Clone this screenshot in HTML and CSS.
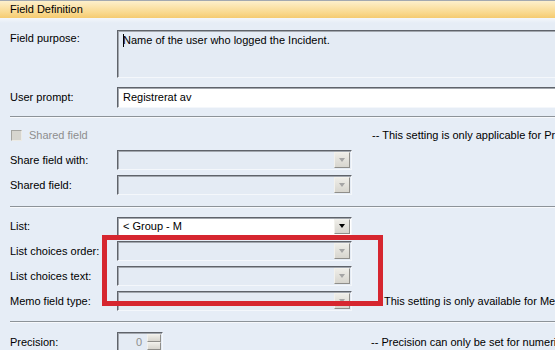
FILE: index.html
```html
<!DOCTYPE html>
<html lang="en">
<head>
  <meta charset="UTF-8" />
  <title>Field Definition</title>
  <link rel="stylesheet" href="styles.css">
</head>
<body>
<div class="panel">
  <div class="panel-title">Field Definition</div>

  <div class="panel-body">
    <!-- Text settings -->
    <div class="group group-text">
      <div class="row row-tall">
        <span class="label">Field purpose:</span>
        <div class="memo"><span class="caret"></span>Name of the user who logged the Incident.</div>
      </div>
      <div class="row">
        <span class="label">User prompt:</span>
        <div class="edit">Registrerat av</div>
      </div>
    </div>

    <div class="sep"></div>

    <!-- Shared field settings -->
    <div class="group group-shared">
      <div class="row row-check">
        <span class="check-wrap"><span class="checkbox"></span>Shared field</span>
        <span class="note">-- This setting is only applicable for Process Fields</span>
      </div>
      <div class="row">
        <span class="label">Share field with:</span>
        <div class="combo"><span class="combo-btn"><span class="arrow"></span></span></div>
      </div>
      <div class="row">
        <span class="label">Shared field:</span>
        <div class="combo"><span class="combo-btn"><span class="arrow"></span></span></div>
      </div>
    </div>

    <div class="sep"></div>

    <!-- List settings -->
    <div class="group group-list">
      <div class="row">
        <span class="label">List:</span>
        <div class="combo combo-on"><span class="combo-text">&lt; Group - M</span><span class="combo-btn"><span class="arrow"></span></span></div>
      </div>
      <div class="row">
        <span class="label">List choices order:</span>
        <div class="combo"><span class="combo-btn"><span class="arrow"></span></span></div>
      </div>
      <div class="row">
        <span class="label">List choices text:</span>
        <div class="combo"><span class="combo-btn"><span class="arrow"></span></span></div>
      </div>
      <div class="row">
        <span class="label">Memo field type:</span>
        <div class="combo"><span class="combo-btn"><span class="arrow"></span></span></div>
        <span class="note note-memo">This setting is only available for Memo fields</span>
      </div>
      <!-- annotation box drawn over the screenshot -->
      <div class="highlight"></div>
    </div>

    <div class="sep"></div>

    <!-- Numeric settings -->
    <div class="group group-num">
      <div class="row">
        <span class="label">Precision:</span>
        <div class="spin-cell">
          <div class="spin"><span class="spin-value">0</span><span class="spin-btns"><span class="spin-up"></span><span class="spin-down"></span></span></div>
        </div>
        <span class="note">-- Precision can only be set for numeric fields</span>
      </div>
    </div>
  </div>
</div>
</body>
</html>
```

FILE: styles.css
```css
body {
  margin: 0;
  padding: 0;
  background-color: #e6edf6;
  font-family: "Liberation Sans", Arial, sans-serif;
  font-size: 11px;
  color: #000;
  overflow: hidden;
}

.panel {
  width: 640px;
}

.panel-title {
  height: 17px;
  line-height: 17px;
  padding-left: 10px;
  border-top: 1px solid #a3a9b0;
  background: linear-gradient(#fdf0cc, #f9d88c 70%, #f5cb70);
}

.panel-body {
  padding-left: 10px;
  background: linear-gradient(#f4f7fb, #e6edf6 5px);
}

.group {
  display: flex;
  flex-direction: column;
  gap: 5px;
}

.group-text {
  padding-top: 12px;
  gap: 9px;
}

.group-shared {
  padding-top: 9px;
}

.group-list {
  position: relative;
  padding-top: 8px;
}

.group-num {
  padding-top: 9px;
}

.row {
  display: flex;
  align-items: center;
  height: 20px;
}

.row-tall {
  height: 48px;
  align-items: flex-start;
}

.row-check {
  height: 16px;
  margin-bottom: 2px;
}

.label {
  width: 107px;
  flex-shrink: 0;
}

.row-tall .label {
  padding-top: 2px;
}

.sep {
  height: 1px;
  background-color: #8d9399;
  border-bottom: 1px solid #f7f9fc;
}

.group-text + .sep {
  margin-top: 9px;
}

.group-shared + .sep {
  margin-top: 11px;
}

.group-list + .sep {
  margin-top: 10px;
}

/* inputs */
.memo,
.edit,
.combo,
.spin {
  box-sizing: border-box;
  border: 1px solid;
  border-color: #5f636a #f4f7fb #f4f7fb #5f636a;
  box-shadow: inset 1px 1px 0 #a2a7ae;
}

.memo {
  flex: 1;
  height: 48px;
  padding: 3px 5px;
  background-color: #e4ebf4;
}

.caret {
  display: inline-block;
  width: 1px;
  height: 13px;
  margin-right: -1px;
  vertical-align: -3px;
  background-color: #000;
}

.edit {
  flex: 1;
  height: 21px;
  line-height: 19px;
  padding-left: 5px;
  background-color: #fff;
}

.check-wrap {
  display: flex;
  align-items: center;
  width: 361px;
  color: #8e8e8e;
  padding-left: 1px;
}

.checkbox {
  width: 11px;
  height: 11px;
  margin-right: 7px;
  box-sizing: border-box;
  border: 1px solid;
  border-color: #a4a4a0 #ecebe6 #ecebe6 #a4a4a0;
  background-color: #d6d5cf;
}

.note {
  white-space: nowrap;
  margin-left: 19px;
}

.check-wrap + .note {
  margin-left: 0;
}

.note-memo {
  margin-left: 32px;
}

.combo {
  display: flex;
  align-items: center;
  width: 235px;
  height: 20px;
  padding: 1px;
  background-color: #e4ebf4;
}

.combo-on {
  background-color: #fff;
  height: 19px;
}

.combo-text {
  flex: 1;
  padding-left: 4px;
}

.combo-btn {
  display: flex;
  align-items: center;
  justify-content: center;
  width: 16px;
  height: 16px;
  margin-left: auto;
  box-sizing: border-box;
  border: 1px solid;
  border-color: #f2f1ec #8f8e8a #8f8e8a #f2f1ec;
  background: linear-gradient(#eeede8, #d7d5ce);
}

.combo-on .combo-btn {
  height: 15px;
}

.arrow {
  width: 0;
  height: 0;
  border-left: 3px solid transparent;
  border-right: 3px solid transparent;
  border-top: 4px solid #a5a5a5;
}

.combo-on .arrow {
  border-top-color: #000;
}

.spin-cell {
  width: 235px;
  align-self: flex-start;
}

.spin {
  display: flex;
  width: 46px;
  height: 20px;
  padding: 1px;
  background-color: #e4ebf4;
}

.spin-value {
  flex: 1;
  text-align: right;
  padding-right: 5px;
  color: #8e8e8e;
  line-height: 16px;
}

.spin-btns {
  display: flex;
  flex-direction: column;
  width: 14px;
}

.spin-up,
.spin-down {
  flex: 1;
  box-sizing: border-box;
  border: 1px solid;
  border-color: #f2f1ec #8f8e8a #8f8e8a #f2f1ec;
  background: linear-gradient(#eeede8, #d7d5ce);
}

.highlight {
  position: absolute;
  left: 92px;
  top: 27px;
  width: 271px;
  height: 61px;
  border: 5px solid #d6262f;
}
```
